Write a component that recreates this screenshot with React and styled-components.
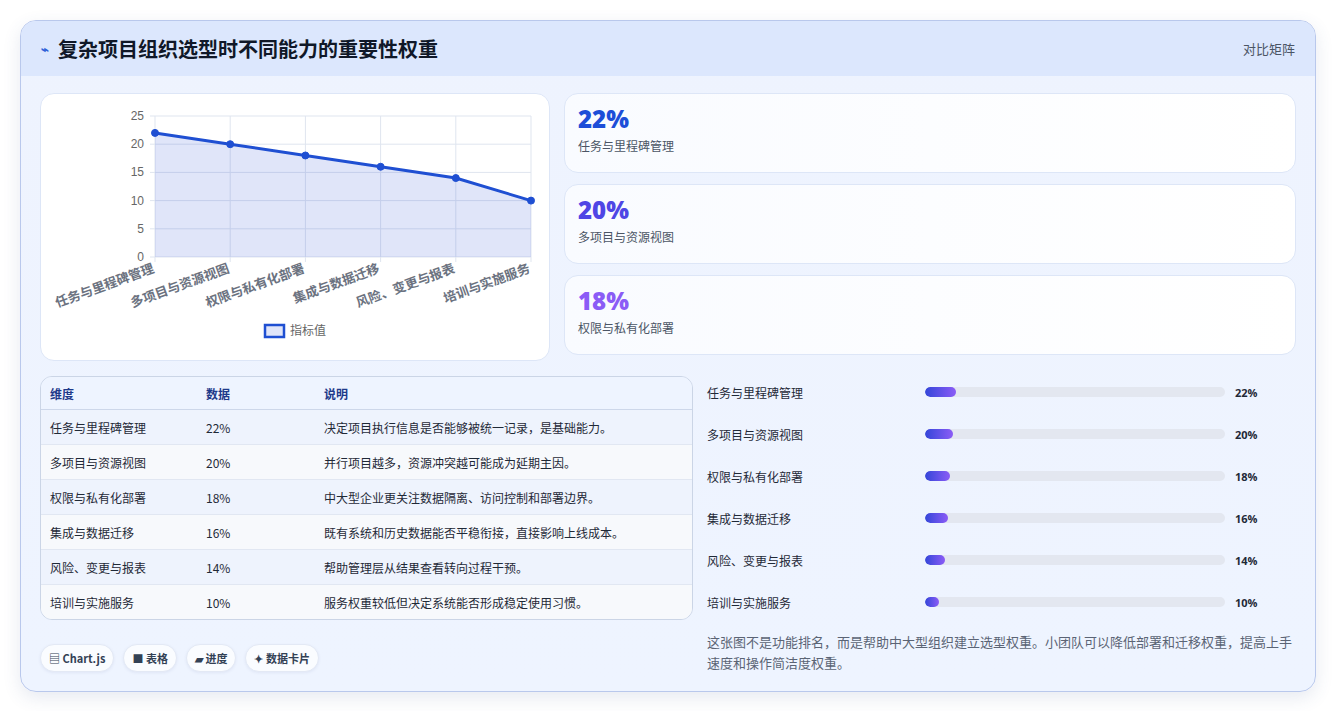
import React from "react";
import styled, { createGlobalStyle } from "styled-components";

const Global = createGlobalStyle`
  body { margin: 0; background: #fff; font-family: "Noto Sans CJK SC", "Noto Sans", sans-serif; }
`;

const data = [
  ["任务与里程碑管理", 22, "决定项目执行信息是否能够被统一记录，是基础能力。"],
  ["多项目与资源视图", 20, "并行项目越多，资源冲突越可能成为延期主因。"],
  ["权限与私有化部署", 18, "中大型企业更关注数据隔离、访问控制和部署边界。"],
  ["集成与数据迁移", 16, "既有系统和历史数据能否平稳衔接，直接影响上线成本。"],
  ["风险、变更与报表", 14, "帮助管理层从结果查看转向过程干预。"],
  ["培训与实施服务", 10, "服务权重较低但决定系统能否形成稳定使用习惯。"],
];

const Page = styled.div`
  padding: 20px 20px 21px 20px;
`;
const Card = styled.div`
  border: 1px solid #b9c8ec;
  border-radius: 16px;
  overflow: hidden;
  background: linear-gradient(180deg, #eef3fe 0%, #eef4ff 100%);
  box-shadow: 0 6px 18px rgba(60, 80, 140, 0.12);
`;
const Header = styled.div`
  height: 55px;
  background: #dce7fd;
  display: flex;
  align-items: center;
  justify-content: space-between;
  padding: 0 20px;
`;
const Title = styled.h1`
  margin: 0;
  font-size: 20px;
  font-weight: 700;
  color: #101828;
  display: flex;
  align-items: center;
  gap: 9px;
`;
const Zap = styled.span`
  color: #2e5fd8;
  font-size: 13px;
`;
const HeadRight = styled.span`
  font-size: 13px;
  color: #4b5565;
`;
const Body = styled.div`
  padding: 17px 19px 18px 19px;
  display: flex;
  flex-direction: column;
  gap: 15px;
`;
const TopRow = styled.div`
  display: grid;
  grid-template-columns: 510px 1fr;
  gap: 14px;
`;
const Panel = styled.div`
  background: #fff;
  border: 1px solid #dde6f7;
  border-radius: 14px;
`;
const ChartPanel = styled(Panel)`
  height: 266px;
`;
const Stats = styled.div`
  display: flex;
  flex-direction: column;
  gap: 11px;
`;
const Stat = styled(Panel)`
  height: 80px;
  box-sizing: border-box;
  padding: 10px 13px;
  background: linear-gradient(90deg, #f9fbff, #fff);
`;
const StatNum = styled.div`
  font-family: "Open Sans", "Noto Sans", sans-serif;
  font-size: 24px;
  font-weight: 800;
  color: ${(p) => p.$c};
  line-height: 30px;
`;
const StatLabel = styled.div`
  font-size: 12px;
  color: #4b5565;
  margin-top: 3px;
`;
const BottomRow = styled.div`
  display: grid;
  grid-template-columns: 653px 1fr;
  gap: 14px;
`;
const LeftCol = styled.div`
  display: flex;
  flex-direction: column;
  gap: 24px;
`;
const Table = styled.table`
  width: 100%;
  border-collapse: separate;
  border-spacing: 0;
  border: 1px solid #cbd5e6;
  border-radius: 12px;
  overflow: hidden;
  font-size: 12px;
  color: #1f2937;
`;
const Th = styled.th`
  text-align: left;
  font-weight: 700;
  color: #1e3a8a;
  background: #eef4ff;
  height: 32px;
  padding: 0 9px;
  border-bottom: 1px solid #cdd7ea;
  width: ${(p) => p.$w || "auto"};
`;
const Tr = styled.tr`
  background: ${(p) => (p.$odd ? "#eef3fd" : "#f7f9fc")};
`;
const Td = styled.td`
  height: 34px;
  padding: 0 9px;
  border-bottom: ${(p) => (p.$last ? "none" : "1px solid #e1e7f2")};
`;
const Chips = styled.div`
  display: flex;
  gap: 9px;
`;
const Chip = styled.span`
  font-size: 11px;
  font-weight: 600;
  color: #334155;
  background: #fafcff;
  border: 1px solid #e3e9f5;
  box-shadow: 0 1px 3px rgba(60, 80, 140, 0.08);
  border-radius: 14px;
  height: 26px;
  padding: 0 8px;
  display: inline-flex;
  align-items: center;
  gap: 3px;
`;
const RightCol = styled.div`
  display: flex;
  flex-direction: column;
  gap: 10px;
`;
const BarRow = styled.div`
  display: grid;
  grid-template-columns: 218px 300px 1fr;
  align-items: center;
  height: 32px;
  font-size: 12px;
  color: #1f2937;
`;
const Track = styled.div`
  height: 10px;
  border-radius: 5px;
  background: #e3e7f0;
  overflow: hidden;
`;
const Fill = styled.div`
  height: 100%;
  border-radius: 5px;
  background: linear-gradient(90deg, #3446d9, #8b5cf6);
`;
const Pct = styled.span`
  font-weight: 700;
  padding-left: 10px;
  font-family: "Open Sans", sans-serif;
  font-size: 11px;
`;
const Note = styled.p`
  margin: 3px 0 0;
  padding-right: 4px;
  font-size: 13px;
  line-height: 21px;
  color: #5b6475;
`;

function Chart() {
  const x0 = 114, x1 = 490, y0 = 22, y1 = 163;
  const xs = data.map((_, i) => x0 + (i * (x1 - x0)) / 5);
  const ys = data.map((d) => y1 - (d[1] / 25) * (y1 - y0));
  const line = xs.map((x, i) => `${i ? "L" : "M"}${x},${ys[i]}`).join(" ");
  return (
    <svg width="509" height="266" viewBox="0 0 509 266" fontFamily="'Noto Sans CJK SC', sans-serif">
      {[0, 5, 10, 15, 20, 25].map((v) => {
        const y = y1 - (v / 25) * (y1 - y0);
        return (
          <g key={v}>
            <line x1={x0 - 5} x2={x1} y1={y} y2={y} stroke="#dfe5ef" />
            <text x={x0 - 11} y={y + 4} textAnchor="end" fontSize="12" fill="#666" fontFamily="Liberation Sans">{v}</text>
          </g>
        );
      })}
      {xs.map((x, i) => (
        <line key={i} x1={x} x2={x} y1={y0} y2={y1 + 5} stroke="#dfe5ef" />
      ))}
      <path d={`${line} L${x1},${y1} L${x0},${y1} Z`} fill="rgba(37,70,210,0.14)" />
      <path d={line} fill="none" stroke="#1f4fd2" strokeWidth="3" />
      {xs.map((x, i) => (
        <circle key={i} cx={x} cy={ys[i]} r="3.5" fill="#1f4fd2" stroke="#1f4fd2" />
      ))}
      {data.map((d, i) => (
        <text key={i} transform={`translate(${xs[i]},${y1 + 15}) rotate(-20)`} textAnchor="end" fontSize="13" fontWeight="600" fill="#6b7280">{d[0]}</text>
      ))}
      <rect x="224" y="231" width="19" height="12" fill="rgba(37,70,210,0.14)" stroke="#1f4fd2" strokeWidth="2.5" />
      <text x="249" y="241" fontSize="12" fill="#666">指标值</text>
    </svg>
  );
}

export default function App() {
  return (
    <Page>
      <Global />
      <Card>
        <Header>
          <Title><Zap>⌁</Zap>复杂项目组织选型时不同能力的重要性权重</Title>
          <HeadRight>对比矩阵</HeadRight>
        </Header>
        <Body>
          <TopRow>
            <ChartPanel><Chart /></ChartPanel>
            <Stats>
              {[["#1d4ed8", 0], ["#4f46e5", 1], ["#8b5cf6", 2]].map(([c, i]) => (
                <Stat key={i}>
                  <StatNum $c={c}>{data[i][1]}%</StatNum>
                  <StatLabel>{data[i][0]}</StatLabel>
                </Stat>
              ))}
            </Stats>
          </TopRow>
          <BottomRow>
            <LeftCol>
              <Table>
                <thead>
                  <tr><Th $w="138px">维度</Th><Th $w="100px">数据</Th><Th>说明</Th></tr>
                </thead>
                <tbody>
                  {data.map((d, i) => (
                    <Tr key={i} $odd={i % 2 === 0}>
                      <Td $last={i === 5}>{d[0]}</Td>
                      <Td $last={i === 5}>{d[1]}%</Td>
                      <Td $last={i === 5}>{d[2]}</Td>
                    </Tr>
                  ))}
                </tbody>
              </Table>
              <Chips>
                <Chip>▤ Chart.js</Chip>
                <Chip>■ 表格</Chip>
                <Chip>▰ 进度</Chip>
                <Chip>✦ 数据卡片</Chip>
              </Chips>
            </LeftCol>
            <RightCol>
              {data.map((d, i) => (
                <BarRow key={i}>
                  <span>{d[0]}</span>
                  <Track><Fill style={{ width: `${d[1] * 0.47}%` }} /></Track>
                  <Pct>{d[1]}%</Pct>
                </BarRow>
              ))}
              <Note>这张图不是功能排名，而是帮助中大型组织建立选型权重。小团队可以降低部署和迁移权重，提高上手速度和操作简洁度权重。</Note>
            </RightCol>
          </BottomRow>
        </Body>
      </Card>
    </Page>
  );
}
